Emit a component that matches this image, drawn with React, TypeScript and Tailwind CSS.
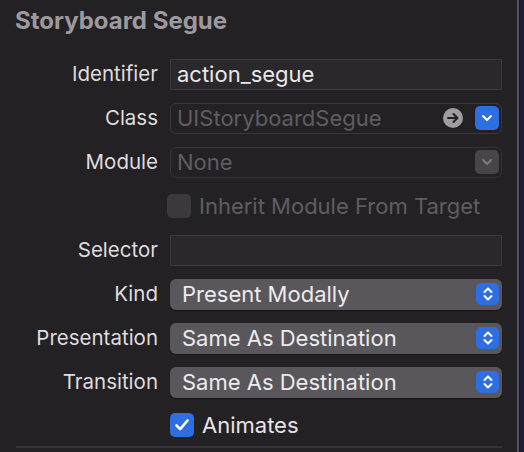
import React from 'react';

const FONT = { fontFamily: 'Inter, "Noto Sans", "Liberation Sans", sans-serif' };

function Label({ children }: { children: React.ReactNode }) {
  return (
    <div className="w-[158px] shrink-0 text-right text-[20.5px] leading-none text-[#dedcdf]">{children}</div>
  );
}

function Row({ label, children }: { label?: string; children: React.ReactNode }) {
  return (
    <div className="flex h-[44px] items-center">
      <Label>{label}</Label>
      <div className="ml-3 flex flex-1 items-center pr-[15px]">{children}</div>
    </div>
  );
}

function TextField({ value }: { value?: string }) {
  return (
    <div className="flex h-[31px] w-full items-center border border-[#3d3b3f] bg-[#2b282c] px-[6px] text-[22px] leading-none text-[#e9e7ea]">
      {value}
    </div>
  );
}

function ChevronDown({ color }: { color: string }) {
  return (
    <svg width="12" height="8" viewBox="0 0 12 8" fill="none">
      <path d="M2 2 L6 6 L10 2" stroke={color} strokeWidth="2" strokeLinecap="round" strokeLinejoin="round" />
    </svg>
  );
}

function Stepper() {
  return (
    <div className="flex h-[22px] w-[23px] items-center justify-center rounded-[5px] bg-[#2f6ee0]">
      <svg width="12" height="16" viewBox="0 0 12 16" fill="none">
        <path d="M2.5 6 L6 2.5 L9.5 6" stroke="white" strokeWidth="2" strokeLinecap="round" strokeLinejoin="round" />
        <path d="M2.5 10 L6 13.5 L9.5 10" stroke="white" strokeWidth="2" strokeLinecap="round" strokeLinejoin="round" />
      </svg>
    </div>
  );
}

function PopUp({ value }: { value: string }) {
  return (
    <div className="flex h-[31px] w-full items-center justify-between rounded-[6px] bg-[#59575b] pl-3 pr-[3px] text-[22px] leading-none text-[#ecebed] shadow-[0_1px_1px_rgba(0,0,0,0.4)]">
      <span>{value}</span>
      <Stepper />
    </div>
  );
}

function Checkbox({ checked }: { checked?: boolean }) {
  if (checked) {
    return (
      <div className="flex h-[24px] w-[24px] items-center justify-center rounded-[5px] bg-[#2f6ee0]">
        <svg width="16" height="14" viewBox="0 0 16 14" fill="none">
          <path d="M2.5 7.5 L6.2 11.2 L13.5 2.5" stroke="white" strokeWidth="2.6" strokeLinecap="round" strokeLinejoin="round" />
        </svg>
      </div>
    );
  }
  return <div className="h-[24px] w-[24px] rounded-[5px] bg-[#3b393d]" />;
}

export default function App() {
  return (
    <div className="flex h-[452px] w-[524px] overflow-hidden bg-[#1b1d3a]" style={FONT}>
      <div className="flex w-[517px] flex-col bg-[#242125]">
        <div className="h-[52px] pl-[15px] pt-[7px] text-[24px] font-bold leading-[28px] text-[#9c9a9e]">
          Storyboard Segue
        </div>

        <Row label="Identifier">
          <TextField value="action_segue" />
        </Row>

        <Row label="Class">
          <div className="-mr-[2px] flex h-[31px] w-full items-center justify-between rounded-[6px] border border-[#3a383c] bg-[#242125] pl-[6px] pr-[2px] text-[22px] leading-none text-[#5f5d61]">
            <span>UIStoryboardSegue</span>
            <div className="flex items-center gap-3">
              <svg width="20" height="20" viewBox="0 0 20 20">
                <circle cx="10" cy="10" r="10" fill="#9f9da1" />
                <path d="M5 10 H14.5 M10.5 6 L14.5 10 L10.5 14" stroke="#242125" strokeWidth="2" fill="none" strokeLinecap="round" strokeLinejoin="round" />
              </svg>
              <div className="flex h-[24px] w-[24px] items-center justify-center rounded-[5px] bg-[#2f6ee0]">
                <ChevronDown color="white" />
              </div>
            </div>
          </div>
        </Row>

        <Row label="Module">
          <div className="-mr-[2px] flex h-[31px] w-full items-center justify-between rounded-[6px] border border-[#363438] bg-[#242125] pl-[6px] pr-[2px] text-[22px] leading-none text-[#5f5d61]">
            <span>None</span>
            <div className="flex h-[24px] w-[24px] items-center justify-center rounded-[5px] bg-[#47454a]">
              <ChevronDown color="#7c7a7e" />
            </div>
          </div>
        </Row>

        <div className="flex h-[44px] items-center">
          <div className="w-[158px] shrink-0" />
          <div className="ml-[9px] flex items-center gap-[8px] text-[22px] leading-none text-[#5f5d61]">
            <Checkbox />
            <span>Inherit Module From Target</span>
          </div>
        </div>

        <Row label="Selector">
          <TextField />
        </Row>

        <Row label="Kind">
          <PopUp value="Present Modally" />
        </Row>

        <Row label="Presentation">
          <PopUp value="Same As Destination" />
        </Row>

        <Row label="Transition">
          <PopUp value="Same As Destination" />
        </Row>

        <div className="flex h-[42px] items-center">
          <div className="w-[158px] shrink-0" />
          <div className="ml-3 flex items-center gap-[8px] text-[22px] leading-none text-[#e6e4e7]">
            <Checkbox checked />
            <span>Animates</span>
          </div>
        </div>

        <div className="ml-4 mr-[15px] h-[2px] bg-[#363438]" />
      </div>
      <div className="w-[2px] bg-[#58565a]" />
      <div className="w-px bg-[#161618]" />
    </div>
  );
}
